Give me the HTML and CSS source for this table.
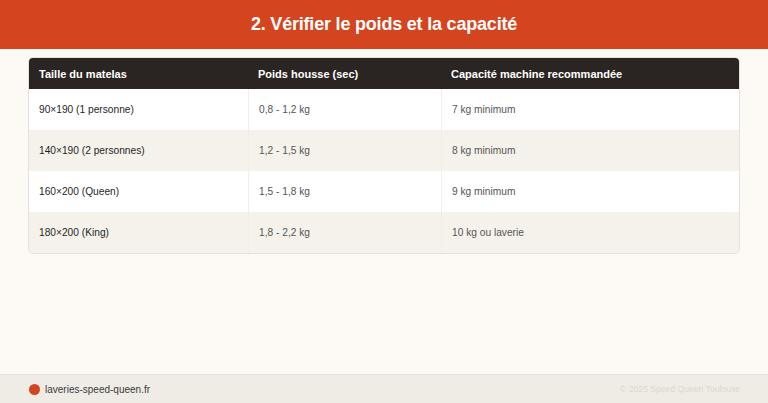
FILE: index.html
```html
<!DOCTYPE html>
<html lang="fr">
<head>
<meta charset="utf-8">
<link rel="stylesheet" href="styles.css">
</head>
<body>
<div class="page">
  <header class="banner"><h1>2. Vérifier le poids et la capacité</h1></header>
  <main class="content">
    <table class="spec">
      <thead>
        <tr><th class="c1">Taille du matelas</th><th class="c2">Poids housse (sec)</th><th class="c3">Capacité machine recommandée</th></tr>
      </thead>
      <tbody>
        <tr><td>90×190 (1 personne)</td><td>0,8 - 1,2 kg</td><td>7 kg minimum</td></tr>
        <tr><td>140×190 (2 personnes)</td><td>1,2 - 1,5 kg</td><td>8 kg minimum</td></tr>
        <tr><td>160×200 (Queen)</td><td>1,5 - 1,8 kg</td><td>9 kg minimum</td></tr>
        <tr><td>180×200 (King)</td><td>1,8 - 2,2 kg</td><td>10 kg ou laverie</td></tr>
      </tbody>
    </table>
  </main>
  <footer class="foot">
    <div class="brand"><span class="dot"></span><span>laveries-speed-queen.fr</span></div>
    <div class="copy">© 2025 Speed Queen Toulouse</div>
  </footer>
</div>
</body>
</html>
```
FILE: styles.css
```css
html, body { margin: 0; padding: 0; }
body {
  width: 768px;
  height: 403px;
  background: #fdf9f5;
  font-family: "Liberation Sans", Arial, sans-serif;
  overflow: hidden;
}
.page {
  display: flex;
  flex-direction: column;
  height: 403px;
}
.banner {
  background: #d4451f;
  height: 49px;
  display: flex;
  align-items: center;
  justify-content: center;
}
.banner h1 {
  margin: 0;
  color: #fff;
  font-size: 18px;
  font-weight: bold;
  letter-spacing: -0.2px;
}
.content {
  flex: 1;
  padding: 8px 28px 0 28px;
}
.spec {
  width: 712px;
  border-collapse: separate;
  border-spacing: 0;
  border: 1px solid #e4e0da;
  border-radius: 5px;
  overflow: hidden;
  font-size: 10.2px;
  table-layout: fixed;
}
.spec th {
  background: #2a2522;
  color: #fff;
  font-size: 11px;
  font-weight: bold;
  text-align: left;
  height: 31px;
  padding: 0 10px;
  box-sizing: border-box;
}
.spec th.c1 { width: 219px; }
.spec th.c2 { width: 193px; }
.spec td {
  height: 41px;
  padding: 0 10px;
  box-sizing: border-box;
  color: #555;
  border-left: 1px solid #f1eee9;
}
.spec td:first-child {
  color: #1f1f1f;
  border-left: none;
}
.spec tbody tr:nth-child(odd) td { background: #ffffff; }
.spec tbody tr:nth-child(even) td { background: #f5f2ec; }
.foot {
  height: 28px;
  background: #efece6;
  border-top: 1px solid #e8e3da;
  display: flex;
  align-items: center;
  justify-content: space-between;
  padding: 0 28px 0 29px;
}
.brand {
  display: flex;
  align-items: center;
  gap: 5px;
  font-size: 10px;
  color: #3a3a3a;
}
.dot {
  width: 11px;
  height: 11px;
  border-radius: 50%;
  background: #d4451f;
}
.copy {
  font-size: 8.6px;
  color: #dcd8d0;
}
```
